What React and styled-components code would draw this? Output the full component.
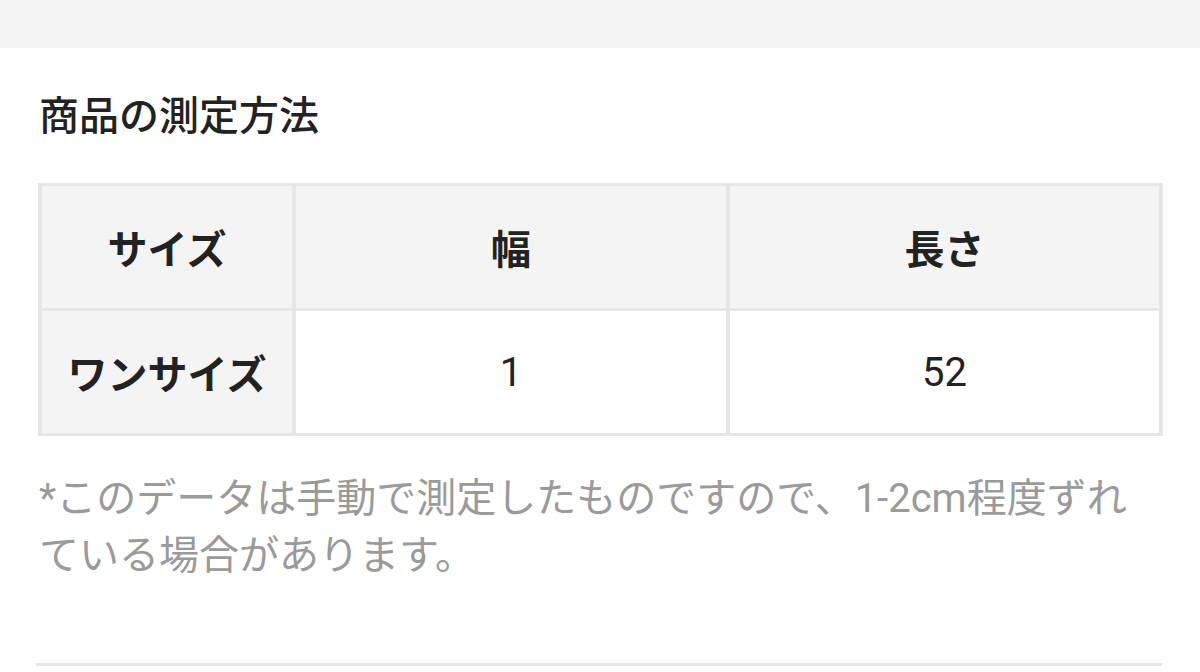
import React from 'react';
import styled, { createGlobalStyle } from 'styled-components';

const GlobalStyle = createGlobalStyle`
  html, body {
    margin: 0;
    padding: 0;
    background: #ffffff;
    font-family: Roboto, "Noto Sans CJK JP", sans-serif;
    color: #222222;
  }
`;

const Page = styled.div`
  width: 1200px;
  height: 672px;
  overflow: hidden;
  background: #ffffff;
`;

const TopBand = styled.div`
  height: 48px;
  background: #f4f4f4;
`;

const Section = styled.section`
  padding: 0 38px;
`;

const Title = styled.h2`
  margin: 0;
  padding: 46px 0 0 1px;
  height: 92px;
  box-sizing: border-box;
  font-size: 40px;
  font-weight: 500;
  line-height: 46px;
  color: #222222;
`;

const Table = styled.table`
  margin-top: 43px;
  width: 1121px;
  border-collapse: collapse;
  table-layout: fixed;
  border: 3px solid #e6e6e6;
`;

const Cell = styled.td`
  height: 122px;
  padding: 0;
  text-align: center;
  vertical-align: middle;
  font-size: 40px;
  font-weight: ${p => (p.$head ? 700 : 400)};
  color: #222222;
  background: ${p => (p.$shade ? '#f4f4f4' : '#ffffff')};
  border-top: 3px solid #e6e6e6;
  border-bottom: 3px solid #e6e6e6;
  border-left: 4px solid #e6e6e6;
  border-right: 4px solid #e6e6e6;
`;

const Note = styled.p`
  margin: 34px 0 0 1px;
  width: 1100px;
  font-size: 40px;
  line-height: 57px;
  color: #9a9a9a;
`;

const Rule = styled.hr`
  margin: 79px 0 0 -2px;
  width: 1126px;
  border: none;
  height: 3px;
  background: #e8e8e8;
`;

const header = ['サイズ', '幅', '長さ'];
const rows = [['ワンサイズ', '1', '52']];

export default function App() {
  return (
    <Page>
      <GlobalStyle />
      <TopBand />
      <Section>
        <Title>商品の測定方法</Title>
        <Table>
          <colgroup>
            <col style={{ width: 254 }} />
            <col style={{ width: 434 }} />
            <col style={{ width: 433 }} />
          </colgroup>
          <tbody>
            <tr>
              {header.map(h => (
                <Cell key={h} $head $shade>{h}</Cell>
              ))}
            </tr>
            {rows.map(r => (
              <tr key={r[0]}>
                {r.map((v, i) => (
                  <Cell key={i} $head={i === 0} $shade={i === 0}>{v}</Cell>
                ))}
              </tr>
            ))}
          </tbody>
        </Table>
        <Note>*このデータは手動で測定したものですので、1-2cm程度ずれている場合があります。</Note>
        <Rule />
      </Section>
    </Page>
  );
}
